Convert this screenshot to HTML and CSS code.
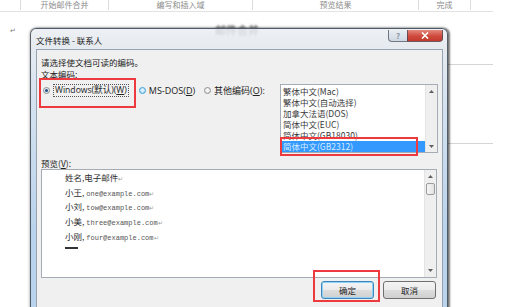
FILE: index.html
```html
<!DOCTYPE html>
<html lang="zh-CN">
<head>
    <meta charset="UTF-8">
    <meta name="viewport" content="width=device-width, initial-scale=1.0">
    <title>文件转换 - 联系人</title>
    <link rel="stylesheet" href="styles.css">
</head>
<body>
    <div class="ribbon">
        <div class="grp grp-lead"></div>
        <div class="grp g1">开始邮件合并</div>
        <div class="grp g2">编写和插入域</div>
        <div class="grp g3">预览结果</div>
        <div class="grp g4">完成</div>
    </div>
    <div class="doc">
        <div class="doc-left"><span class="mark">↵</span></div>
        <div class="doc-right">
            <div class="doc-title">邮件合并</div>
            <div class="doc-rule r1"></div>
            <div class="doc-rule"></div>
        </div>
    </div>

    <div class="dialog">
        <div class="titlebar">
            <span class="title">文件转换 - 联系人</span>
            <div class="caption">
                <span class="cap-btn help">?</span>
                <span class="cap-btn close">
                    <svg width="8" height="7" viewBox="0 0 8 7"><path d="M1 0.5L7 6.5M7 0.5L1 6.5" stroke="#fff" stroke-width="1.6"/></svg>
                </span>
            </div>
        </div>
        <div class="client">
            <p class="line">请选择使文档可读的编码。</p>
            <p class="line tall">文本编码:</p>
            <div class="enc-row">
                <label class="opt"><span class="radio on"></span><span class="focus">Windows(默认)(<u>W</u>)</span></label>
                <label class="opt"><span class="radio hot"></span><span>MS-DOS(<u>D</u>)</span></label>
                <label class="opt"><span class="radio"></span><span>其他编码(<u>O</u>):</span></label>
                <div class="listbox">
                    <ul class="items">
                        <li>繁体中文(Mac)</li>
                        <li>繁体中文(自动选择)</li>
                        <li>加拿大法语(DOS)</li>
                        <li>简体中文(EUC)</li>
                        <li>简体中文(GB18030)</li>
                        <li class="sel">简体中文(GB2312)</li>
                    </ul>
                    <div class="vscroll">
                        <span class="arr"><svg width="5" height="3" viewBox="0 0 5 3"><path d="M0 3L2.5 0L5 3z" fill="#606060"/></svg></span>
                        <span class="arr end"><svg width="5" height="3" viewBox="0 0 5 3"><path d="M0 0L2.5 3L5 0z" fill="#606060"/></svg></span>
                    </div>
                </div>
            </div>
            <p class="line preview-label">预览(<u>V</u>):</p>
            <div class="preview">
                <div class="pv-text">
                    <div class="pv-line">姓名,电子邮件<span class="pm">↵</span></div>
                    <div class="pv-line">小王, <span class="mono">one@example.com</span><span class="pm">↵</span></div>
                    <div class="pv-line">小刘, <span class="mono">tow@example.com</span><span class="pm">↵</span></div>
                    <div class="pv-line">小美, <span class="mono">three@example.com</span><span class="pm">↵</span></div>
                    <div class="pv-line">小刚, <span class="mono">four@example.com</span><span class="pm">↵</span></div>
                    <div class="caret"></div>
                </div>
                <div class="vscroll">
                    <span class="arr tallarr"><svg width="5" height="3" viewBox="0 0 5 3"><path d="M0 3L2.5 0L5 3z" fill="#606060"/></svg></span>
                    <span class="thumb"></span>
                    <span class="arr tallarr end"><svg width="5" height="3" viewBox="0 0 5 3"><path d="M0 0L2.5 3L5 0z" fill="#606060"/></svg></span>
                </div>
            </div>
            <div class="buttons">
                <button class="btn default">确定</button>
                <button class="btn">取消</button>
            </div>
        </div>

        <!-- red annotation boxes drawn over the dialog -->
        <div class="callout c-windows"></div>
        <div class="callout c-gb2312"></div>
        <div class="callout c-ok"></div>
    </div>
</body>
</html>
```

FILE: styles.css
```css
* {
    box-sizing: border-box;
}
body {
    margin: 0;
    width: 527px;
    height: 307px;
    overflow: hidden;
    position: relative;
    background: #fff;
    font-family: "Noto Sans CJK SC", "Liberation Sans", sans-serif;
    color: #1e1e1e;
}
p {
    margin: 0;
}

/* word ribbon behind the dialog */
.ribbon {
    display: flex;
    width: 493px;
    height: 12px;
    border-bottom: 1px solid #e2e2e2;
    font-size: 8px;
    line-height: 10px;
    color: #8c8c8c;
}
.grp {
    height: 10px;
    border-left: 1px solid #dcdcdc;
    text-align: center;
}
.grp-lead { width: 20px; border-left: 0; }
.g1 { width: 88px; }
.g2 { width: 144px; }
.g3 { width: 166px; }
.g4 { width: 53px; border-right: 1px solid #dcdcdc; }

.doc {
    display: flex;
    width: 493px;
}
.doc-left {
    width: 200px;
    padding: 14px 0 0 10px;
}
.mark {
    display: block;
    font-size: 7px;
    line-height: 8px;
    color: #777;
}
.doc-right {
    flex: 1;
}
.doc-title {
    margin: 12px 0 0 15px;
    font-size: 11px;
    line-height: 13px;
    font-weight: bold;
    color: #6a6a6a;
    filter: blur(1.2px);
}
.doc-rule {
    border-top: 1px solid #d4d4d4;
}
.r1 {
    margin-top: 27px;
    height: 79px;
}

/* dialog window */
.dialog {
    position: absolute;
    left: 30px;
    top: 28px;
    width: 418px;
    height: 290px;
    padding: 0 4px 0 5px;
    display: flex;
    flex-direction: column;
    border: 1px solid rgba(40, 48, 58, 0.75);
    border-radius: 6px 6px 0 0;
    background: linear-gradient(to bottom, rgba(233, 237, 241, 0.82) 0, rgba(228, 233, 239, 0.95) 20px, #d3e1ef 80px, #bad3ec 200px);
    box-shadow: 0 0 3px rgba(0, 0, 0, 0.45), 2px 0 2px rgba(0, 0, 0, 0.45);
    font-size: 8.5px;
}
.titlebar {
    height: 20px;
    display: flex;
    align-items: flex-start;
}
.title {
    margin-top: 5px;
    line-height: 12px;
    color: #222;
}
.caption {
    margin-left: auto;
    margin-top: 1px;
    display: flex;
}
.cap-btn {
    height: 12px;
    display: flex;
    align-items: center;
    justify-content: center;
    border: 1px solid rgba(60, 70, 85, 0.7);
    border-top: 0;
}
.help {
    width: 19px;
    border-right: 0;
    border-radius: 0 0 0 4px;
    background: linear-gradient(#e9eef3, #cfd8e2);
    color: #8a96a3;
    font-size: 8px;
    font-weight: bold;
    line-height: 1;
}
.close {
    width: 36px;
    border-radius: 0 0 4px 0;
    background: linear-gradient(#e48a7e, #cf4a3c 55%, #c23b2e);
}

.client {
    flex: 1;
    background: #f0f0f0;
    border: 1px solid #97a3b0;
    padding: 6px 4px 0 4px;
}
.line {
    line-height: 12px;
    color: #222;
}
.line.tall {
    line-height: 13px;
}
u {
    text-decoration-thickness: 1px;
    text-underline-offset: 1px;
}

.enc-row {
    margin-top: 3px;
    display: flex;
    align-items: flex-start;
}
.opt {
    display: flex;
    align-items: center;
    gap: 3px;
    height: 12px;
    margin-right: 9px;
    font-family: "Open Sans", "Noto Sans CJK SC", sans-serif;
    font-size: 9px;
    line-height: 11px;
    color: #222;
}
.opt:first-child {
    margin-left: 2px;
    margin-right: 10px;
}
.radio {
    width: 7px;
    height: 7px;
    border-radius: 50%;
    border: 1px solid #8e8f8f;
    background: radial-gradient(circle at 50% 40%, #fff, #dadada);
    display: flex;
    align-items: center;
    justify-content: center;
}
.radio.on::after {
    content: "";
    width: 3px;
    height: 3px;
    border-radius: 50%;
    background: #1b4d87;
}
.radio.hot {
    border-color: #3c9fd8;
    background: radial-gradient(circle at 50% 40%, #eef9ff, #9fd6f6);
}
.focus {
    border: 1px dotted #555;
    padding: 0 1px;
    font-size: 8.6px;
}

.listbox {
    width: 158px;
    height: 69px;
    margin-left: auto;
    flex-shrink: 0;
    display: flex;
    background: #fff;
    border: 1px solid #a5acb5;
}
.items {
    flex: 1;
    margin: 0;
    padding: 1px 0 0;
    list-style: none;
}
.items li {
    height: 11px;
    line-height: 11px;
    padding-left: 2px;
    color: #3a3a3a;
}
.items li.sel {
    background: #3399ff;
    color: #d6ebff;
}
.vscroll {
    width: 12px;
    display: flex;
    flex-direction: column;
    background: #efefef;
    border-left: 1px solid #e4e4e4;
}
.arr {
    height: 12px;
    display: flex;
    align-items: center;
    justify-content: center;
}
.arr.tallarr {
    height: 13px;
}
.arr.end {
    margin-top: auto;
}
.thumb {
    height: 12px;
    margin: 0 1px;
    border: 1px solid #9c9c9c;
    border-radius: 2px;
    background: linear-gradient(to right, #f6f6f6, #e2e2e2);
}

.preview-label {
    margin-top: 4px;
}
.preview {
    width: 396px;
    height: 109px;
    display: flex;
    background: #fff;
    border: 1px solid #a5acb5;
}
.pv-text {
    flex: 1;
    padding: 0 0 0 23px;
    color: #2e2e2e;
}
.pv-line {
    height: 14.7px;
    line-height: 14.7px;
    white-space: nowrap;
    overflow: hidden;
}
.mono {
    font-family: "Liberation Mono", monospace;
    font-size: 7px;
    color: #555;
}
.pm {
    font-size: 6px;
    color: #999;
}
.caret {
    width: 13px;
    height: 2px;
    margin-top: 4px;
    background: #333;
}

.buttons {
    margin-top: 3px;
    display: flex;
    justify-content: flex-end;
    gap: 9px;
    padding-right: 2px;
}
.btn {
    width: 53px;
    height: 18px;
    padding: 0;
    font-family: inherit;
    font-size: 8.5px;
    color: #222;
    border: 1px solid #707070;
    border-radius: 3px;
    background: linear-gradient(#f4f4f4 0, #ebebeb 50%, #dddddd 50%, #d0d0d0);
}
.btn.default {
    border-color: #3d86bd;
    box-shadow: inset 0 0 0 1px #8fd2f5;
}

.callout {
    position: absolute;
    border: 2px solid #ec3a3f;
}
.c-windows { left: 8px; top: 49px; width: 97px; height: 30px; }
.c-gb2312 { left: 249px; top: 108px; width: 138px; height: 19px; }
.c-ok { left: 282px; top: 241px; width: 67px; height: 32px; }
```
